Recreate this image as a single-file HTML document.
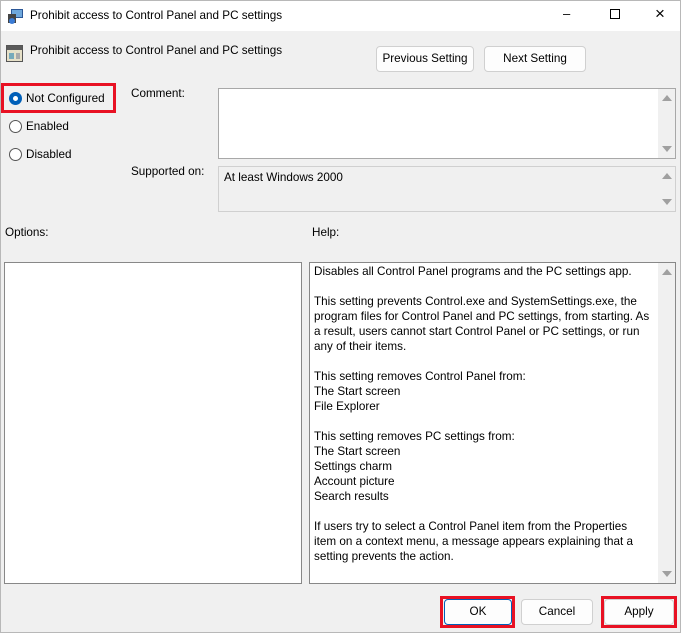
<!DOCTYPE html>
<html><head><style>
*{margin:0;padding:0;box-sizing:border-box}
body{width:681px;height:633px;background:#f0f0f0;font-family:"Liberation Sans",sans-serif;font-size:11.7px;color:#000;position:relative;overflow:hidden}
.a{position:absolute;white-space:nowrap}
.btn{position:absolute;background:#fdfdfd;border:1px solid #d0d0d0;border-radius:4px;text-align:center}
.radio{position:absolute;width:13px;height:13px;border:1px solid #555;border-radius:50%;background:#fff}
.box{position:absolute;border:1px solid #a8a8a8;background:#fff}
.sb{position:absolute;right:0;top:0;bottom:0;width:17px;background:#f0f0f0}
.up,.dn{position:absolute;left:4px;width:0;height:0;border-left:5px solid transparent;border-right:5px solid transparent}
.up{top:6px;border-bottom:6px solid #a0a0a0}
.dn{bottom:6px;border-top:6px solid #a0a0a0}
.red{position:absolute;border:3px solid #e81123}
</style></head><body>
<div class="a" style="left:0;top:0;width:681px;height:633px;border:1px solid #b8b8b8"></div>
<div class="a" style="left:1px;top:1px;width:679px;height:30px;background:#fff"></div>
<svg class="a" style="left:8px;top:8px" width="16" height="16"><rect x="3" y="1" width="12" height="9" fill="#2b5797"/><rect x="4" y="2" width="10" height="7" fill="#6fa8dc"/><rect x="0" y="6" width="8" height="9" fill="#444"/><circle cx="4" cy="13" r="3" fill="#3a7bd5"/></svg>
<div class="a" style="left:30px;top:9px">Prohibit access to Control Panel and PC settings</div>
<div class="a" style="left:563px;top:6px;font-size:13px">&#8211;</div>
<div class="a" style="left:610px;top:9px;width:10px;height:10px;border:1px solid #000"></div>
<div class="a" style="left:655px;top:4px;font-size:17px">&#215;</div>
<svg class="a" style="left:6px;top:45px" width="17" height="17"><rect x="0.5" y="0.5" width="16" height="16" fill="#e6e0c8" stroke="#555"/><rect x="1" y="1" width="15" height="4" fill="#5a5a5a"/><rect x="3" y="8" width="5" height="6" fill="#7ab"/><rect x="10" y="8" width="4" height="6" fill="#aaa"/></svg>
<div class="a" style="left:30px;top:44px">Prohibit access to Control Panel and PC settings</div>
<div class="btn" style="left:376px;top:46px;width:98px;height:26px;line-height:24px">Previous Setting</div>
<div class="btn" style="left:484px;top:46px;width:102px;height:26px;line-height:24px">Next Setting</div>
<div class="red" style="left:1px;top:83px;width:115px;height:30px"></div>
<div class="radio" style="left:9px;top:92px;border:4px solid #005fb8"></div>
<div class="a" style="left:26px;top:92px">Not Configured</div>
<div class="radio" style="left:9px;top:120px"></div>
<div class="a" style="left:26px;top:120px">Enabled</div>
<div class="radio" style="left:9px;top:148px"></div>
<div class="a" style="left:26px;top:148px">Disabled</div>
<div class="a" style="left:131px;top:87px">Comment:</div>
<div class="box" style="left:218px;top:88px;width:458px;height:71px"><div class="sb"><div class="up"></div><div class="dn"></div></div></div>
<div class="a" style="left:131px;top:165px">Supported on:</div>
<div class="box" style="left:218px;top:166px;width:458px;height:46px;background:#f0f0f0;border-color:#d0d0d0"><div class="a" style="left:5px;top:4px">At least Windows 2000</div><div class="sb"><div class="up"></div><div class="dn"></div></div></div>
<div class="a" style="left:5px;top:226px">Options:</div>
<div class="a" style="left:312px;top:226px">Help:</div>
<div class="box" style="left:4px;top:262px;width:298px;height:322px;border-color:#888"></div>
<div class="box" style="left:309px;top:262px;width:367px;height:322px;border-color:#888"><div class="a" style="left:4px;top:1px;line-height:15px;white-space:pre">Disables all Control Panel programs and the PC settings app.

This setting prevents Control.exe and SystemSettings.exe, the
program files for Control Panel and PC settings, from starting. As
a result, users cannot start Control Panel or PC settings, or run
any of their items.

This setting removes Control Panel from:
The Start screen
File Explorer

This setting removes PC settings from:
The Start screen
Settings charm
Account picture
Search results

If users try to select a Control Panel item from the Properties
item on a context menu, a message appears explaining that a
setting prevents the action.</div><div class="sb"><div class="up"></div><div class="dn"></div></div></div>
<div class="btn" style="left:444px;top:599px;width:68px;height:26px;line-height:24px;border-color:#005fb8">OK</div>
<div class="red" style="left:440px;top:596px;width:75px;height:32px"></div>
<div class="btn" style="left:521px;top:599px;width:72px;height:26px;line-height:24px">Cancel</div>
<div class="btn" style="left:604px;top:599px;width:70px;height:26px;line-height:24px">Apply</div>
<div class="red" style="left:601px;top:596px;width:76px;height:32px"></div>
</body></html>
